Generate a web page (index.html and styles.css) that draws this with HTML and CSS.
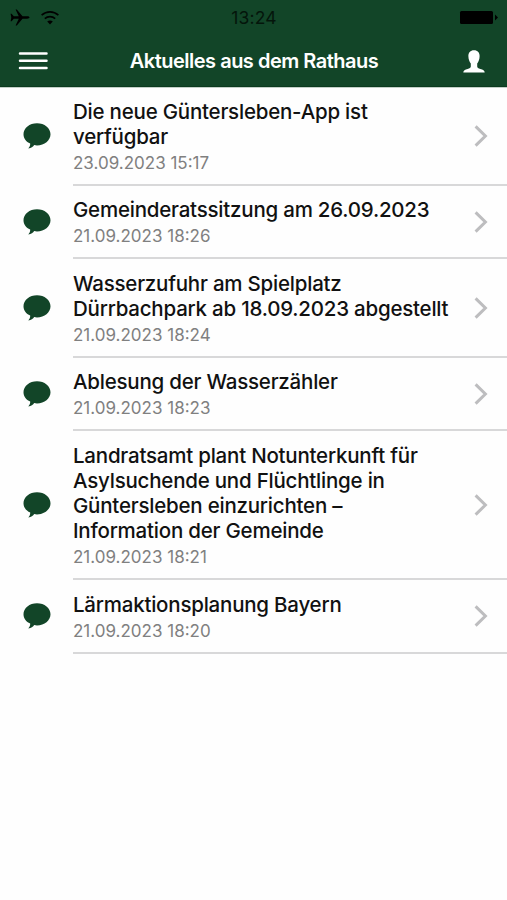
FILE: index.html
```html
<!DOCTYPE html>
<html lang="de">
<head>
<meta charset="utf-8">
<title>Aktuelles aus dem Rathaus</title>
<link rel="stylesheet" href="styles.css">
</head>
<body>
<svg class="defs" width="0" height="0" aria-hidden="true">
  <symbol id="bubble" viewBox="0 0 28 26"><path d="M14 .2C6.500.2.500 5.100.500 11.200c0 4.100 2.600 7.500 6.700 9.400C7.300 22.600 6.600 24 5.300 25.600c2.900-.6 4.800-1.900 5.900-3.500.9.200 1.800.3 2.800.3 7.500 0 13.500-5 13.500-11.200S21.500.2 14 .2z"/></symbol>
  <symbol id="chevron" viewBox="0 0 14 24"><path d="M1.600 2.400 11.400 12 1.600 21.600" fill="none" stroke="#bdbdbf" stroke-width="3"/></symbol>
</svg>
<header class="header">
  <div class="status">
    <div class="signals">
      <svg width="20" height="17" viewBox="0 0 20 17"><path d="M.6 4.800h1l2.200 2.500h5L5.600.5h1.200l5.700 6.800h4.600c1.400 0 2.400.5 2.400 1.200s-1 1.200-2.400 1.200h-4.600l-5.700 6.800H5.600l3.200-6.800h-5l-2.200 2.500h-1l.7-3.700z"/></svg>
      <svg width="20" height="15" viewBox="0 0 20 15"><path d="M1.600 5.200C6.500.8 13.500.8 18.400 5.200M4.800 8.600c3-2.700 7.400-2.700 10.400 0" fill="none" stroke="#000" stroke-width="1.600"/><path d="M10 14.500 7.200 11.500c1.500-1.500 4.100-1.500 5.600 0z"/></svg>
    </div>
    <time class="clock">13:24</time>
    <svg class="battery" width="40" height="15" viewBox="0 0 40 15"><rect x="2" y="1" width="33" height="13" rx="1.500"/><path d="M37 4.500 40 7.500 37 10.500z"/></svg>
  </div>
  <div class="bar">
    <svg class="menu" width="30" height="20" viewBox="0 0 30 20"><path d="M2 2.500h26.500M2 9.700h26.500M2 16.900h26.500" stroke="#fff" stroke-width="2.500" stroke-linecap="round"/></svg>
    <h1 class="heading">Aktuelles aus dem Rathaus</h1>
    <svg class="user" width="22" height="23" viewBox="0 0 22 23"><path d="M11 .3c3.700 0 5.800 2.500 5.600 6.100-.1 3-1.200 5.400-2.400 7v3.200c0 1.300 1.100 1.800 3.200 2.300 2.500.5 4.300 1.300 4.300 3.700H.3c0-2.400 1.800-3.200 4.300-3.700 2.100-.5 3.200-1 3.200-2.300v-3.200c-1.200-1.600-2.300-4-2.400-7C5.200 2.800 7.300.3 11 .3z" fill="#fff"/></svg>
  </div>
</header>
<main class="list">
  <article class="item"><svg class="bubble"><use href="#bubble"/></svg><div class="body"><div class="text"><h2 class="title">Die neue Güntersleben-App ist<br>verfügbar</h2><time class="date">23.09.2023 15:17</time></div><svg class="chevron"><use href="#chevron"/></svg></div></article>
  <article class="item"><svg class="bubble"><use href="#bubble"/></svg><div class="body"><div class="text"><h2 class="title">Gemeinderatssitzung am 26.09.2023</h2><time class="date">21.09.2023 18:26</time></div><svg class="chevron"><use href="#chevron"/></svg></div></article>
  <article class="item"><svg class="bubble"><use href="#bubble"/></svg><div class="body"><div class="text"><h2 class="title">Wasserzufuhr am Spielplatz<br>Dürrbachpark ab 18.09.2023 abgestellt</h2><time class="date">21.09.2023 18:24</time></div><svg class="chevron"><use href="#chevron"/></svg></div></article>
  <article class="item"><svg class="bubble"><use href="#bubble"/></svg><div class="body"><div class="text"><h2 class="title">Ablesung der Wasserzähler</h2><time class="date">21.09.2023 18:23</time></div><svg class="chevron"><use href="#chevron"/></svg></div></article>
  <article class="item"><svg class="bubble"><use href="#bubble"/></svg><div class="body"><div class="text"><h2 class="title">Landratsamt plant Notunterkunft für<br>Asylsuchende und Flüchtlinge in<br>Güntersleben einzurichten –<br>Information der Gemeinde</h2><time class="date">21.09.2023 18:21</time></div><svg class="chevron"><use href="#chevron"/></svg></div></article>
  <article class="item"><svg class="bubble"><use href="#bubble"/></svg><div class="body"><div class="text"><h2 class="title">Lärmaktionsplanung Bayern</h2><time class="date">21.09.2023 18:20</time></div><svg class="chevron"><use href="#chevron"/></svg></div></article>
</main>
</body>
</html>
```
FILE: styles.css
```css
* { box-sizing: border-box; }
body {
  margin: 0;
  min-height: 900px;
  background: #fefefe;
  color: #111;
  font-family: Inter, "Liberation Sans", sans-serif;
}
svg { display: block; flex: none; }
.defs { position: absolute; }
.header {
  height: 87px;
  background: #124528;
  border-bottom: 1px solid #0b3a1f;
}
.status {
  display: grid;
  grid-template-columns: 1fr auto 1fr;
  align-items: center;
  height: 34px;
  padding: 0 9px 0 10px;
}
.signals { display: flex; align-items: center; gap: 10px; }
.clock { font-size: 17.5px; letter-spacing: .2px; color: #04150b; }
.battery { justify-self: end; }
.bar {
  display: flex;
  align-items: center;
  justify-content: space-between;
  height: 54px;
  padding: 0 22px 0 18px;
}
.heading {
  margin: 0 3px 0 0;
  color: #fff;
  font-size: 20px;
  font-weight: 600;
  letter-spacing: -.5px;
  white-space: nowrap;
}
.list { box-shadow: inset 0 1px #c3d0c8; }
.bubble { width: 28px; height: 26px; margin: 0 22px 1px 23px; align-self: center; fill: #124528; }
.item { display: flex; align-items: stretch; }
.body {
  display: flex;
  flex: 1;
  align-items: center;
  justify-content: space-between;
  padding: 12.600px 19px 10.100px 0;
  border-bottom: 2px solid #d8d8d9;
}
.title {
  margin: 0;
  font-size: 20.500px;
  font-weight: 500;
  line-height: 24.950px;
  letter-spacing: -.22px;
  white-space: nowrap;
}
.date {
  display: block;
  padding-top: 2px;
  color: #808080;
  font-size: 17px;
  line-height: 22px;
}
.chevron { width: 14px; height: 24px; margin-bottom: 2px; }
```
